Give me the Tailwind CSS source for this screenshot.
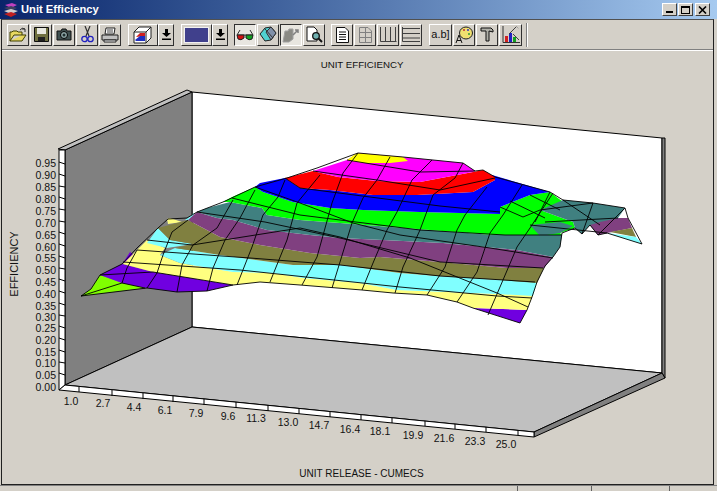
<!DOCTYPE html>
<html lang="en">
<head>
<meta charset="UTF-8">
<title>Unit Efficiency</title>
<script src="https://cdn.jsdelivr.net/npm/@tailwindcss/browser@4"></script>
</head>
<body class="bg-[#d4d0c8]">
<div class="w-[717px] h-[491px] flex flex-col overflow-hidden bg-[#d4d0c8] font-['Liberation_Sans',sans-serif] text-[#111]">

  <!-- title bar -->
  <div class="h-[19px] shrink-0 flex items-center pl-[3px] pr-[7px] bg-gradient-to-r from-[#0a246a] to-[#a6caf0]">
    <svg class="w-[16px] h-[16px] mr-[2px]" viewBox="0 0 16 16">
      <path d="M2 3 L9 1 L14 3 L8 6 Z" fill="#c040c0"/>
      <path d="M1 6 L8 4 L14 6 L8 9 Z" fill="#404060"/>
      <path d="M1 9 L8 7 L15 9 L8 12 Z" fill="#d0d0d0"/>
      <path d="M1 12 L8 10 L14 12 L8 15 Z" fill="#c02020"/>
    </svg>
    <span class="text-white font-bold text-[11.2px] leading-none">Unit Efficiency</span>
    <div class="ml-auto flex items-center">
      <button class="w-[15px] h-[13px] mr-[1px] flex items-end justify-start pl-[3px] pb-[2px] bg-[#d4d0c8] border-t border-l border-t-white border-l-white border-r border-b border-r-[#404040] border-b-[#404040]"><span class="block w-[7px] h-[2px] bg-black"></span></button>
      <button class="w-[15px] h-[13px] mr-[2px] flex items-center justify-center bg-[#d4d0c8] border-t border-l border-t-white border-l-white border-r border-b border-r-[#404040] border-b-[#404040]"><span class="block w-[9px] h-[8px] border border-t-2 border-black"></span></button>
      <button class="w-[15px] h-[13px] flex items-center justify-center bg-[#d4d0c8] border-t border-l border-t-white border-l-white border-r border-b border-r-[#404040] border-b-[#404040]">
        <svg class="w-[9px] h-[8px]" viewBox="0 0 9 8"><path d="M1 0.5 L8 7.5 M8 0.5 L1 7.5" stroke="#000" stroke-width="1.6"/></svg>
      </button>
    </div>
  </div>

  <!-- window body -->
  <div class="ml-[1px] mr-[3px] h-[466px] shrink-0 flex flex-col border border-[#202020] border-t-[#505050] border-r-[#202020]">

    <!-- toolbar -->
    <div class="h-[30px] shrink-0 flex items-center pl-[5px] border-b border-b-[#808080]">
      <div class="flex gap-[1px]">
        <button class="w-[22px] h-[22px] flex items-center justify-center bg-[#d4d0c8] border border-t-white border-l-white border-r-[#303030] border-b-[#303030]">
          <svg class="w-[18px] h-[16px]" viewBox="0 0 18 16"><path d="M1 14 V5 H3 L4 4 H8 L9 5 H13 V8 H5 L1 14 H13 L17 8 H13" fill="#e8d860" stroke="#404000"/><path d="M11 3 Q13 0 16 2 M16 2 L16 5 M16 2 L13 2" fill="none" stroke="#303030"/></svg>
        </button>
        <button class="w-[22px] h-[22px] flex items-center justify-center bg-[#d4d0c8] border border-t-white border-l-white border-r-[#303030] border-b-[#303030]">
          <svg class="w-[15px] h-[15px]" viewBox="0 0 15 15"><path d="M0.5 0.5 H14.5 V14.5 H0.5 Z" fill="#707040" stroke="#101010"/><rect x="3" y="1" width="9" height="6" fill="#e8e8e0"/><rect x="4" y="10" width="7" height="4" fill="#202020"/></svg>
        </button>
        <button class="w-[22px] h-[22px] flex items-center justify-center bg-[#d4d0c8] border border-t-white border-l-white border-r-[#303030] border-b-[#303030]">
          <svg class="w-[16px] h-[13px]" viewBox="0 0 16 13"><path d="M1 3 H5 L6 1 H10 L11 3 H15 V12 H1 Z" fill="#405050" stroke="#101010"/><circle cx="8" cy="7" r="3.5" fill="#90a8a8" stroke="#000"/><circle cx="8" cy="7" r="1.5" fill="#203030"/></svg>
        </button>
        <button class="w-[22px] h-[22px] flex items-center justify-center bg-[#d4d0c8] border border-t-white border-l-white border-r-[#303030] border-b-[#303030]">
          <svg class="w-[13px] h-[17px]" viewBox="0 0 13 17"><path d="M4 0 L8 10 M9 0 L5 10" stroke="#303030" stroke-width="1.2"/><circle cx="3.5" cy="13" r="2.7" fill="none" stroke="#2020c0" stroke-width="1.3"/><circle cx="9.5" cy="13" r="2.7" fill="none" stroke="#2020c0" stroke-width="1.3"/></svg>
        </button>
        <button class="w-[22px] h-[22px] flex items-center justify-center bg-[#d4d0c8] border border-t-white border-l-white border-r-[#303030] border-b-[#303030]">
          <svg class="w-[18px] h-[16px]" viewBox="0 0 18 16"><path d="M5 1 H14 L13 7 H4 Z" fill="#fff" stroke="#202020"/><path d="M1 8 H17 V13 H1 Z" fill="#c0c0c0" stroke="#202020"/><path d="M3 13 H15 V15 H3 Z" fill="#fff" stroke="#202020"/><path d="M6 3 H12 M6 5 H12" stroke="#404040"/></svg>
        </button>
      </div>
      <div class="flex ml-[7px]">
        <button class="w-[30px] h-[22px] flex items-center justify-center bg-[#d4d0c8] border border-t-white border-l-white border-r-[#303030] border-b-[#303030]">
          <svg class="w-[20px] h-[18px]" viewBox="0 0 20 18"><path d="M6 1 H18 V12 L13 17 H1 V6 Z" fill="#fff" stroke="#202020"/><path d="M6 1 L1 6 H13 L18 1 M13 6 V17" fill="none" stroke="#202020"/><path d="M3 11 L7 7 H12 L12 10 Z" fill="#d02020"/><path d="M2 14 L7 10 H12 V15 H3 Z" fill="#2030c0"/></svg>
        </button>
        <button class="w-[16px] h-[22px] flex items-center justify-center bg-[#d4d0c8] border border-t-white border-l-white border-r-[#303030] border-b-[#303030]">
          <svg class="w-[9px] h-[11px]" viewBox="0 0 9 11"><path d="M3 0 H6 V4 H9 L4.5 8 L0 4 H3 Z M0 9.5 H9 V11 H0 Z" fill="#000"/></svg>
        </button>
      </div>
      <div class="flex ml-[7px]">
        <button class="w-[31px] h-[22px] flex items-center justify-center bg-[#d4d0c8] border border-t-white border-l-white border-r-[#303030] border-b-[#303030]">
          <span class="block w-[25px] h-[16px] bg-[#40408c] border border-[#f0f0f0]"></span>
        </button>
        <button class="w-[16px] h-[22px] flex items-center justify-center bg-[#d4d0c8] border border-t-white border-l-white border-r-[#303030] border-b-[#303030]">
          <svg class="w-[9px] h-[11px]" viewBox="0 0 9 11"><path d="M3 0 H6 V4 H9 L4.5 8 L0 4 H3 Z M0 9.5 H9 V11 H0 Z" fill="#000"/></svg>
        </button>
      </div>
      <div class="flex gap-[1px] ml-[6px]">
        <button class="w-[22px] h-[22px] flex items-center justify-center bg-[#e8e6e0] border border-t-[#303030] border-l-[#303030] border-r-white border-b-white">
          <svg class="w-[18px] h-[12px]" viewBox="0 0 18 12"><path d="M4 1 L1 6 M14 1 L17 6 M1 6 H17" stroke="#303030" fill="none"/><path d="M1 6 H8 V9 Q5 12 2 10 Z" fill="#d01010" stroke="#202020"/><path d="M10 6 H17 L16 10 Q13 12 10 9 Z" fill="#10a020" stroke="#202020"/></svg>
        </button>
        <button class="w-[22px] h-[22px] flex items-center justify-center bg-[#d4d0c8] border border-t-white border-l-white border-r-[#303030] border-b-[#303030]">
          <svg class="w-[18px] h-[17px]" viewBox="0 0 18 17"><path d="M1 8 L6 2 L12 1 L17 7 L12 14 L6 15 Z" fill="#50d0d0" stroke="#202020"/><path d="M6 3 L14 12 M12 1 L17 7 L12 14 L7 6 Z" fill="#8090a8" stroke="#303030"/></svg>
        </button>
        <button class="w-[22px] h-[22px] flex items-center justify-center bg-[#e8e6e0] border border-t-[#303030] border-l-[#303030] border-r-white border-b-white">
          <svg class="w-[18px] h-[16px]" viewBox="0 0 18 16"><path d="M1 15 L3 4 H6 L7 2 H11 V12 L7 15 Z" fill="#8a8a84" stroke="#a0a0a0"/><path d="M11 8 L16 3 M13 3 H16 V6" fill="none" stroke="#808080" stroke-width="1.5"/></svg>
        </button>
        <button class="w-[22px] h-[22px] flex items-center justify-center bg-[#d4d0c8] border border-t-white border-l-white border-r-[#303030] border-b-[#303030]">
          <svg class="w-[17px] h-[17px]" viewBox="0 0 17 17"><path d="M1 1 H8 L11 4 V15 H1 Z" fill="#fff" stroke="#101010"/><circle cx="10" cy="10" r="3.3" fill="#70b0b0" stroke="#101010" stroke-width="1.3"/><path d="M12.5 12.5 L16 16" stroke="#101010" stroke-width="2"/></svg>
        </button>
      </div>
      <div class="flex gap-[1px] ml-[6px]">
        <button class="w-[22px] h-[22px] flex items-center justify-center bg-[#d4d0c8] border border-t-white border-l-white border-r-[#303030] border-b-[#303030]">
          <svg class="w-[13px] h-[16px]" viewBox="0 0 13 16"><path d="M0.5 0.5 H9 L12.5 4 V15.5 H0.5 Z" fill="#fff" stroke="#101010"/><path d="M3 5 H10 M3 7.5 H10 M3 10 H10 M3 12.5 H10" stroke="#101010"/></svg>
        </button>
        <button class="w-[22px] h-[22px] flex items-center justify-center bg-[#d4d0c8] border border-t-white border-l-white border-r-[#303030] border-b-[#303030]">
          <svg class="w-[13px] h-[16px]" viewBox="0 0 13 16"><path d="M0.5 0.5 H9 L12.5 4 V15.5 H0.5 Z M6.5 1 V15 M1 5.5 H12 M1 10.5 H12" fill="none" stroke="#808080"/></svg>
        </button>
        <button class="w-[22px] h-[22px] flex items-center justify-center bg-[#d4d0c8] border border-t-white border-l-white border-r-[#303030] border-b-[#303030]">
          <svg class="w-[18px] h-[15px]" viewBox="0 0 18 15"><path d="M1.5 0 V14.5 H17.5 M6.5 0 V14 M11.5 0 V14 M16.5 0 V14" fill="none" stroke="#404040"/></svg>
        </button>
        <button class="w-[22px] h-[22px] flex items-center justify-center bg-[#d4d0c8] border border-t-white border-l-white border-r-[#303030] border-b-[#303030]">
          <svg class="w-[18px] h-[15px]" viewBox="0 0 18 15"><path d="M0.5 0 V14.5 H18 M1 1.5 H18 M1 6.5 H18 M1 11 H18" fill="none" stroke="#404040"/></svg>
        </button>
      </div>
      <div class="flex gap-[1px] ml-[7px]">
        <button class="w-[23px] h-[22px] flex items-center justify-center bg-[#d4d0c8] border border-t-white border-l-white border-r-[#303030] border-b-[#303030] text-[11px] leading-none">a.b]</button>
        <button class="w-[22px] h-[22px] flex items-center justify-center bg-[#d4d0c8] border border-t-white border-l-white border-r-[#303030] border-b-[#303030]">
          <svg class="w-[18px] h-[18px]" viewBox="0 0 18 18"><ellipse cx="11" cy="7" rx="6.5" ry="6" fill="#f0e070" stroke="#202020"/><circle cx="9" cy="4" r="1" fill="#c03030"/><circle cx="13" cy="4" r="1" fill="#3030c0"/><circle cx="14" cy="8" r="1" fill="#30a030"/><path d="M1 17 L4 9 L7 17 M2 14.5 H6" fill="none" stroke="#101010"/></svg>
        </button>
        <button class="w-[22px] h-[22px] flex items-center justify-center bg-[#d4d0c8] border border-t-white border-l-white border-r-[#303030] border-b-[#303030]">
          <svg class="w-[14px] h-[15px]" viewBox="0 0 14 15"><path d="M1 1 H11 L13 3 V5 L9 4 V14 H6 V4 H1 Z" fill="#b0b0a8" stroke="#101010"/></svg>
        </button>
        <button class="w-[23px] h-[22px] flex items-center justify-center bg-[#d4d0c8] border border-t-white border-l-white border-r-[#303030] border-b-[#303030]">
          <svg class="w-[18px] h-[17px]" viewBox="0 0 18 17"><path d="M1 0 V16.5 H18" fill="none" stroke="#303030"/><rect x="3" y="10" width="3" height="6" fill="#d02020"/><rect x="7" y="7" width="3" height="9" fill="#2020c0"/><rect x="11" y="11" width="3" height="5" fill="#10a020"/><path d="M7 8 L14 1 M11 8 L17 14" stroke="#404040"/><path d="M14 0 L17 3" stroke="#808080" stroke-dasharray="1 1"/></svg>
        </button>
      </div>
      <div class="ml-[4px] h-[24px] w-[2px] border-l border-l-[#808080] border-r border-r-white"></div>
    </div>

    <!-- chart panel, svg units are window pixels -->
    <div class="grow border-t border-t-white">
      <svg class="block w-[711px] h-[434px]" viewBox="2 51 711 434" font-family="Liberation Sans, sans-serif" font-size="10.5" fill="#111">
        <text x="362" y="67.5" text-anchor="middle" font-size="9.7">UNIT EFFICIENCY</text>
        <text x="361.5" y="477" text-anchor="middle" font-size="10">UNIT RELEASE - CUMECS</text>
        <text transform="translate(18 264) rotate(-90)" text-anchor="middle" font-size="11">EFFICIENCY</text>

        <!-- walls and floor -->
        <polygon points="192,92 662,138 662,373 192,327" fill="#fff" stroke="#000"/>
        <polygon points="65,150 192,92 192,327 65,385" fill="#808080" stroke="#000"/>
        <polygon points="58,149 187,90 192,92 65,150" fill="#c0c0c0" stroke="#000"/>
        <polygon points="662,138 665,138 665,378 662,373" fill="#808080" stroke="#000"/>
        <polygon points="65,385 192,327 662,373 534,432" fill="#c0c0c0" stroke="#000"/>
        <polygon points="534,432 662,373 665,378 534,437" fill="#808080" stroke="#000"/>
        <polygon points="59,150 65,150 65,385 59,390" fill="#fff" stroke="#000"/>
        <polygon points="59,390 65,385 534,432 534,437" fill="#fff" stroke="#000"/>

        <!-- y ticks -->
        <path stroke="#000" fill="none" d="M59 162 L65 164 M59 174 L65 176 M59 186 L65 187 M59 197 L65 199 M59 209 L65 210 M59 221 L65 222 M59 232 L65 234 M59 244 L65 246 M59 256 L65 258 M59 268 L65 269 M59 279 L65 281 M59 291 L65 293 M59 303 L65 305 M59 315 L65 316 M59 326 L65 328 M59 338 L65 340 M59 350 L65 352 M59 362 L65 363 M59 373 L65 375"/>
        <!-- x ticks -->
        <path stroke="#000" fill="none" d="M79 387 V392 M112 390 V396 M143 393 V399 M173 396 V402 M204 399 V405 M236 402 V408 M268 405 V411 M299 408 V414 M330 412 V417 M361 415 V420 M392 418 V423 M425 421 V426 M455 424 V429 M486 427 V432 M518 430 V435"/>

        <g text-anchor="end">
          <text x="56" y="167">0.95</text><text x="56" y="179">0.90</text><text x="56" y="191">0.85</text><text x="56" y="203">0.80</text>
          <text x="56" y="215">0.75</text><text x="56" y="226.500">0.70</text><text x="56" y="239">0.65</text><text x="56" y="250.500">0.60</text>
          <text x="56" y="262">0.55</text><text x="56" y="274">0.50</text><text x="56" y="286">0.45</text><text x="56" y="298">0.40</text>
          <text x="56" y="309.500">0.35</text><text x="56" y="320.500">0.30</text><text x="56" y="332">0.25</text><text x="56" y="344">0.20</text>
          <text x="56" y="355.500">0.15</text><text x="56" y="367">0.10</text><text x="56" y="379">0.05</text><text x="56" y="391">0.00</text>
        </g>
        <g text-anchor="middle">
          <text x="71" y="405">1.0</text><text x="103" y="407">2.7</text><text x="134" y="411">4.4</text><text x="165" y="414">6.1</text><text x="196" y="417">7.9</text>
          <text x="228" y="420">9.6</text><text x="256" y="422">11.3</text><text x="288" y="426">13.0</text><text x="319" y="429">14.7</text><text x="350" y="433">16.4</text>
          <text x="380" y="435">18.1</text><text x="413" y="439">19.9</text><text x="444" y="442">21.6</text><text x="475" y="445">23.3</text><text x="506" y="448">25.0</text>
        </g>

        <!-- surface bands -->
        <polygon fill="#ffff80" points="167,219 170,218 182,222 168,224"/>
        <polygon fill="#80ffff" points="185,220 194,213 192,221"/>
        <polygon fill="#80ff00" points="81,296 91,289 100,275 122,283 145,288"/>
        <polygon fill="#7000e0" points="100,275 122,264 153,272 233,285 207,291 177,292 147,288 122,283"/>
        <polygon fill="#7000e0" points="123,263 130,252 137,257"/>
        <polygon fill="#7000e0" points="473,308 527,310 520,323"/>
        <polygon fill="#ffff80" points="123,264 137,250 147,240 165,248 160,255 180,263 233,272 273,273 303,278 360,283 397,290 497,294 533,295 527,310 473,308 457,302 427,295 393,293 362,290 300,285 260,282 233,285 153,272"/>
        <polygon fill="#80ffff" points="147,243 158,228 170,240 193,244 167,248"/>
        <polygon fill="#80ffff" points="160,255 175,248 220,255 293,265 340,265 400,273 437,276 500,280 537,282 533,296 497,294 397,290 360,283 303,278 273,273 233,272 180,263"/>
        <polygon fill="#808040" points="158,228 188,220 220,237 260,245 310,253 360,258 380,257 440,262 507,268 544,268 537,283 500,280 437,276 400,273 340,265 293,265 220,255 175,248 193,244 170,240"/>
        <polygon fill="#804080" points="188,220 197,212 217,218 233,220 267,230 310,235 340,238 383,240 443,243 517,250 553,257 544,268 507,268 440,262 380,257 360,258 310,253 260,245 220,237"/>
        <polygon fill="#408080" points="197,212 207,208 230,202 262,208 267,215 300,220 340,223 417,229 493,235 562,235 560,247 553,257 517,250 443,243 383,240 340,238 310,235 267,230 233,220 217,218"/>
        <polygon fill="#00ff00" points="223,202 232,197 255,187 263,192 293,202 330,208 363,210 420,212 500,214 500,207 530,195 550,192 563,202 540,210 573,222 575,228 560,233 562,235 493,235 417,229 340,223 300,220 267,215 262,208 230,202"/>
        <polygon fill="#0000ff" points="255,187 260,183 285,178 300,188 330,190 373,195 417,195 473,192 495,180 492,175 550,192 530,195 500,207 500,214 420,212 363,210 330,208 293,202 263,192"/>
        <polygon fill="#ff0000" points="285,178 313,171 338,177 377,181 420,182 473,172 483,170 495,177 495,180 473,192 417,195 373,195 330,190 300,188"/>
        <polygon fill="#ff00ff" points="313,171 347,160 358,153 403,157 463,163 475,171 473,172 420,182 377,181 338,177"/>
        <polygon fill="#ffff00" points="347,160 357,153 403,157 408,161 390,163 363,163"/>
        <polygon fill="#408080" points="540,210 563,200 593,203 625,208 618,218 598,235 590,225 582,234 575,228 573,222"/>
        <polygon fill="#408080" points="530,225 560,222 573,226 560,233 540,236"/>
        <polygon fill="#804080" points="618,218 628,218 632,228 607,233 598,235 590,225 600,222"/>
        <polygon fill="#808040" points="610,232 632,228 636,237"/>
        <polygon fill="#80ffff" points="607,233 636,237 642,244"/>

        <!-- mesh -->
        <g fill="none" stroke="#000" stroke-width="0.9">
          <path d="M81 296 L91 289 L100 275 L122 264 L137 248 L158 228 L168 219 L187 218 L197 212 L223 202 L255 187 L287 178 L317 168 L347 157 L358 153 L403 157 L463 163 L475 171 L483 170 L495 177 L550 192 L563 200 L593 203 L625 208 L628 218 L642 244 L607 233 L598 235 L590 225 L582 234 L575 228 L562 233 L560 247 L553 257 L545 266 L537 282 L532 297 L527 310 L520 323 L473 308 L457 302 L427 295 L393 293 L362 290 L300 285 L260 282 L233 285 L207 291 L177 292 L147 288 L81 296"/>
          <path d="M81 296 L122 283 L145 288"/>
          <path d="M100 275 L153 272 L233 285"/>
          <path d="M123 262 L240 270 L400 287 L497 296 L532 298"/>
          <path d="M137 250 L250 258 L340 265 L440 276 L535 282"/>
          <path d="M147 240 L192 245 L300 228 L340 237 L410 258 L497 293 L528 307"/>
          <path d="M197 212 L265 222 L340 238 L440 262 L543 268"/>
          <path d="M232 198 L300 215 L420 230 L505 235 L562 235"/>
          <path d="M255 187 L300 203 L353 223 L400 235 L490 248 L553 258"/>
          <path d="M285 178 L300 188 L370 197 L440 206 L500 212"/>
          <path d="M313 171 L377 180 L440 190 L495 178"/>
          <path d="M347 160 L420 172 L475 171"/>
          <path d="M122 283 L127 268 L137 250"/>
          <path d="M147 288 L157 273 L163 255 L172 232 L188 220"/>
          <path d="M177 292 L182 265 L193 245 L217 228 L233 200"/>
          <path d="M207 291 L213 268 L225 240 L240 218 L255 190"/>
          <path d="M237 285 L252 247 L263 215 L278 197 L285 180"/>
          <path d="M270 282 L287 240 L297 203 L320 175"/>
          <path d="M302 285 L317 257 L332 203 L343 173 L358 153"/>
          <path d="M332 288 L352 223 L363 198 L377 180 L390 157"/>
          <path d="M362 290 L373 263 L387 230 L397 212 L412 180 L432 160"/>
          <path d="M395 293 L403 267 L420 230 L433 195 L455 178 L463 163"/>
          <path d="M427 295 L445 267 L457 230 L465 215 L487 187"/>
          <path d="M457 302 L477 272 L490 233 L503 215 L522 185"/>
          <path d="M488 315 L503 280 L517 247 L530 228 L553 193"/>
          <path d="M500 207 L523 217 L540 210 M510 201 L545 218 M530 195 L560 210 M550 192 L535 222"/>
          <path d="M540 210 L593 203 L582 234 M563 200 L600 225 M625 208 L598 235 M545 222 L618 218 M530 225 L607 233"/>
        </g>
      </svg>
    </div>
  </div>

  <!-- status bar -->
  <div class="h-[6px] flex border-t border-t-[#808080]">
    <div class="w-[518px] border-r border-r-[#606060]"></div>
    <div class="w-[74px] border-r border-r-[#606060]"></div>
    <div class="w-[78px] border-r border-r-[#606060]"></div>
  </div>
</div>
</body>
</html>
